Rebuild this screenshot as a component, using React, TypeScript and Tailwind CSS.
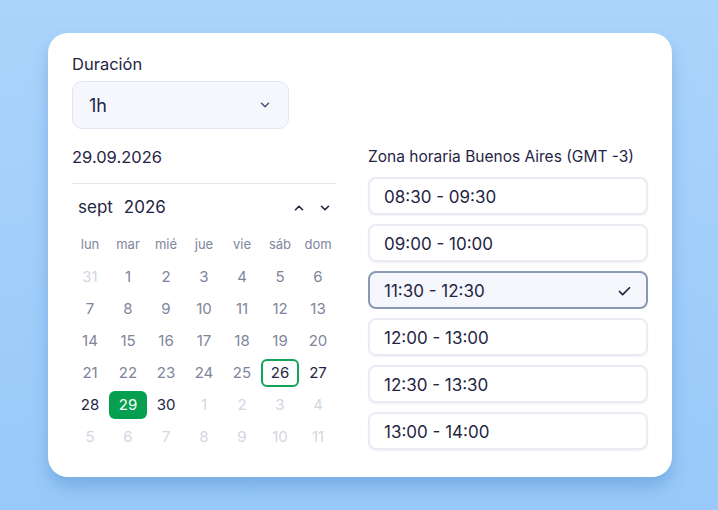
import { Check, ChevronDown, ChevronUp } from 'lucide-react'

const WEEKDAYS = ['lun', 'mar', 'mié', 'jue', 'vie', 'sáb', 'dom']

type Day = { n: number; kind: 'out' | 'past' | 'today' | 'open' | 'selected' }

const DAYS: Day[] = [
  { n: 31, kind: 'out' },
  ...Array.from({ length: 25 }, (_, i) => ({ n: i + 1, kind: 'past' as const })),
  { n: 26, kind: 'today' },
  { n: 27, kind: 'open' },
  { n: 28, kind: 'open' },
  { n: 29, kind: 'selected' },
  { n: 30, kind: 'open' },
  ...Array.from({ length: 11 }, (_, i) => ({ n: i + 1, kind: 'out' as const })),
]

const SLOTS = ['08:30 - 09:30', '09:00 - 10:00', '11:30 - 12:30', '12:00 - 13:00', '12:30 - 13:30', '13:00 - 14:00']

function dayClass(kind: Day['kind']) {
  switch (kind) {
    case 'out':
      return 'text-[#d3d6e2]'
    case 'past':
      return 'text-[#80859d]'
    case 'today':
      return 'text-[#1f2544] border-2 border-[#13a356] rounded-[6px]'
    case 'open':
      return 'text-[#1f2544]'
    case 'selected':
      return 'text-white bg-[#05a04f] rounded-[6px]'
  }
}

export default function App() {
  return (
    <div
      className="w-[718px] h-[510px] overflow-hidden pt-[33px] bg-gradient-to-b from-[#abd4fb] to-[#98c9f8]"
      style={{ fontFamily: 'Inter, "Noto Sans", sans-serif' }}
    >
      <div className="mx-auto w-[624px] h-[444px] translate-x-px bg-white rounded-[20px] px-6 pt-[21px] shadow-[0_10px_16px_rgba(60,120,190,0.35)]">
        <div className="text-[16.5px] leading-[20px] text-[#1f2544]">Duración</div>
        <div className="mt-[7px] w-[217px] h-[48px] rounded-[10px] border border-[#e2e6f1] bg-[#f5f7fc] flex items-center justify-between pl-[16px] pr-[16px]">
          <span className="text-[18px] text-[#1f2544]">1h</span>
          <ChevronDown size={14} strokeWidth={2.6} className="text-[#4b5573]" />
        </div>

        <div className="mt-[18px] flex gap-8">
          <div className="w-[264px]">
            <div className="text-[16.5px] leading-[20px] text-[#1f2544]">29.09.2026</div>
            <div className="mt-4 border-t border-[#e3e6ef]" />
            <div className="mt-[8px] h-[32px] flex items-center justify-between pl-[6px] pr-[4px]">
              <div className="text-[17px] text-[#1f2544] flex gap-[11px]">
                <span>sept</span>
                <span>2026</span>
              </div>
              <div className="flex items-center gap-[12px] text-[#1f2544]">
                <ChevronUp size={14} strokeWidth={2.8} />
                <ChevronDown size={14} strokeWidth={2.8} />
              </div>
            </div>
            <div className="mt-[5px] grid grid-cols-7 -mx-px">
              {WEEKDAYS.map(w => (
                <div key={w} className="h-[32px] flex items-center justify-center text-[13px] text-[#80869e]">
                  {w}
                </div>
              ))}
              {DAYS.map((d, i) => (
                <div key={i} className="h-[32px] flex items-center justify-center">
                  <div className={`w-full h-[28px] flex items-center justify-center text-[15px] ${dayClass(d.kind)}`}>
                    {d.n}
                  </div>
                </div>
              ))}
            </div>
          </div>

          <div className="w-[280px]">
            <div className="text-[15.5px] leading-[20px] text-[#1f2544]">Zona horaria Buenos Aires (GMT -3)</div>
            <div className="mt-[10px] flex flex-col gap-[9px]">
              {SLOTS.map((s, i) => {
                const selected = i === 2
                return (
                  <div
                    key={s}
                    className={
                      selected
                        ? 'h-[38px] rounded-[8px] border-2 border-[#8a98b3] bg-[#f5f7fc] flex items-center justify-between pl-[14px] pr-[14px]'
                        : 'h-[38px] rounded-[8px] border-2 border-[#e9ecf5] bg-white shadow-[0_1px_2px_rgba(30,40,80,0.06)] flex items-center pl-[14px]'
                    }
                  >
                    <span className="pt-[3px] text-[17px] text-[#1f2544]">{s}</span>
                    {selected && <Check size={15} strokeWidth={2.8} className="mt-[2px] text-[#1f2544]" />}
                  </div>
                )
              })}
            </div>
          </div>
        </div>
      </div>
    </div>
  )
}
